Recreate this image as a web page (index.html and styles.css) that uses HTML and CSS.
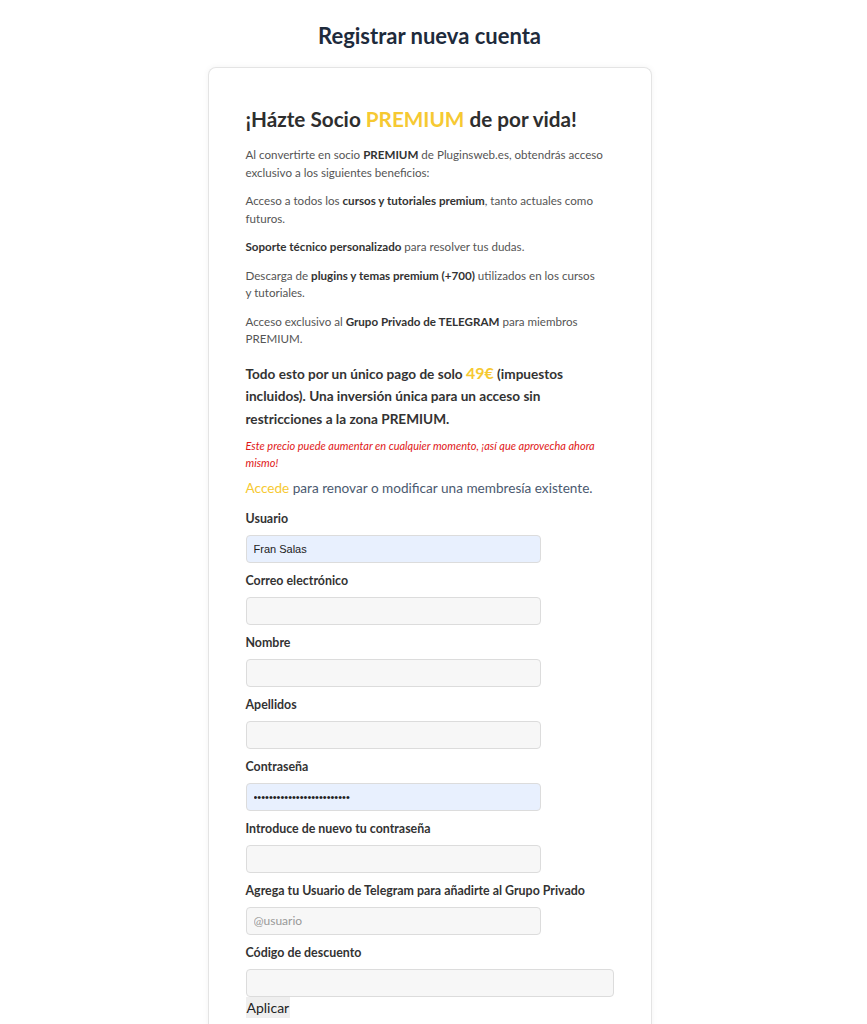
FILE: index.html
```html
<!DOCTYPE html>
<html lang="es">
<head>
    <meta charset="UTF-8">
    <meta name="viewport" content="width=device-width, initial-scale=1.0">
    <title>Registrar nueva cuenta</title>
    <link rel="stylesheet" href="styles.css">
</head>
<body>
    <h1 class="page-title">Registrar nueva cuenta</h1>
    <div class="register-box">
        <h2>¡Házte Socio <span class="gold">PREMIUM</span> de por vida!</h2>
        <p>Al convertirte en socio <strong>PREMIUM</strong> de Pluginsweb.es, obtendrás acceso exclusivo a los siguientes beneficios:</p>
        <p>Acceso a todos los <strong>cursos y tutoriales premium</strong>, tanto actuales como futuros.</p>
        <p><strong>Soporte técnico personalizado</strong> para resolver tus dudas.</p>
        <p>Descarga de <strong>plugins y temas premium (+700)</strong> utilizados en los cursos y&nbsp;tutoriales.</p>
        <p>Acceso exclusivo al <strong>Grupo Privado de TELEGRAM</strong> para miembros PREMIUM.</p>
        <p class="price">Todo esto por un único pago de solo <span class="gold big">49€</span> (impuestos incluidos). Una inversión única para un acceso sin restricciones a la zona PREMIUM.</p>
        <p class="warning">Este precio puede aumentar en cualquier momento, ¡así que aprovecha ahora mismo!</p>
        <p class="login-link"><a href="#">Accede</a> para renovar o modificar una membresía existente.</p>

        <form class="register-form">
            <label for="user">Usuario</label>
            <input type="text" id="user" class="filled" value="Fran Salas">

            <label for="email">Correo electrónico</label>
            <input type="email" id="email">

            <label for="first">Nombre</label>
            <input type="text" id="first">

            <label for="last">Apellidos</label>
            <input type="text" id="last">

            <label for="pass">Contraseña</label>
            <input type="password" id="pass" class="filled" value="aaaaaaaaaaaaaaaaaaaaaaaaa">

            <label for="pass2">Introduce de nuevo tu contraseña</label>
            <input type="password" id="pass2">

            <label for="telegram">Agrega tu Usuario de Telegram para añadirte al Grupo Privado</label>
            <input type="text" id="telegram" placeholder="@usuario">

            <label for="coupon">Código de descuento</label>
            <input type="text" id="coupon" class="wide">
            <button type="button" class="apply">Aplicar</button>
        </form>
    </div>
</body>
</html>
```

FILE: styles.css
```css
body {
    font-family: Lato, "Open Sans", sans-serif;
    margin: 0;
    padding-right: 8px;
    background-color: #fff;
    color: #555;
}
.page-title {
    text-align: center;
    font-size: 22px;
    font-weight: 700;
    color: #1e2b3c;
    margin: 22px 0 18px;
}
.register-box {
    width: 368px;
    margin: 0 auto;
    padding: 39px 37px 0;
    border: 1px solid #e4e4e4;
    border-bottom: none;
    border-radius: 8px 8px 0 0;
    box-shadow: 0 0 6px rgba(0,0,0,0.05);
    min-height: 960px;
}
.register-box h2 {
    font-size: 20.7px;
    font-weight: 700;
    color: #2e2e2e;
    margin: 0 0 15px;
}
.gold {
    color: #f6c932;
}
.register-box p {
    font-size: 11.6px;
    line-height: 17.5px;
    margin: 0 0 11px;
}
.register-box strong {
    color: #333;
}
.register-box p.price {
    font-size: 13.6px;
    font-weight: 700;
    line-height: 22.5px;
    color: #333;
    margin-top: 14px;
    margin-bottom: 7px;
}
.price .big {
    font-size: 16px;
}
.register-box p.warning {
    font-size: 11px;
    font-style: italic;
    color: #e01818;
    line-height: 17px;
    margin-bottom: 9px;
}
.register-box p.login-link {
    font-size: 13.6px;
    color: #4b5a70;
    margin-bottom: 13px;
}
.login-link a {
    color: #f6c932;
    text-decoration: none;
}
.register-form label {
    display: block;
    font-size: 12.4px;
    font-weight: 700;
    color: #333;
    margin-bottom: 9px;
}
.register-form input {
    display: block;
    box-sizing: border-box;
    width: 295px;
    height: 28px;
    padding: 0 7px;
    margin: 0 0 10px;
    background-color: #f7f7f7;
    border: 1px solid #dcdcdc;
    border-radius: 4px;
    font-family: "Liberation Sans", Arial, sans-serif;
    font-size: 11px;
    color: #222;
}
.register-form input.filled {
    background-color: #e8f0fe;
}
.register-form input::placeholder {
    font-family: Lato, sans-serif;
    font-size: 12px;
    color: #999;
}
.register-form input.wide {
    width: 368px;
    margin-bottom: 0;
}
.apply {
    font-family: Lato, sans-serif;
    font-size: 14px;
    color: #222;
    background-color: #efefef;
    border: none;
    padding: 2px 1px;
    cursor: pointer;
}
```
